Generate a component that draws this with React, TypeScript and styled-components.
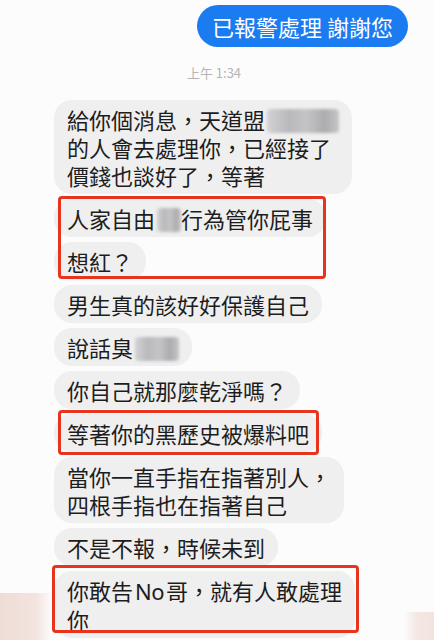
import React from "react";
import styled, { createGlobalStyle } from "styled-components";

const GlobalStyle = createGlobalStyle`
  html, body {
    margin: 0;
    padding: 0;
    background: #fcfcfc;
  }
  body {
    font-family: "Noto Sans CJK TC", "Noto Sans", sans-serif;
  }
`;

const Page = styled.div`
  position: relative;
  width: 434px;
  height: 640px;
  overflow: hidden;
  box-sizing: border-box;
  padding: 5px 26px 0 54px;
  display: flex;
  flex-direction: column;
  background:
    linear-gradient(90deg, #efdcd6 0%, #f3e4df 70%, rgba(252, 252, 252, 0) 100%) 0 593px / 52px 47px no-repeat,
    linear-gradient(90deg, rgba(252, 252, 252, 0) 0%, #f4e8e4 40%, #f2e3de 100%) 404px 612px / 30px 28px no-repeat,
    #fcfcfc;
`;

const OutgoingRow = styled.div`
  display: flex;
  justify-content: flex-end;
`;

const OutgoingBubble = styled.div`
  background: #1b7cf1;
  color: #ffffff;
  font-size: 22px;
  line-height: 28px;
  padding: 7px 15px;
  border-radius: 21px;
  white-space: nowrap;
`;

const Timestamp = styled.div`
  margin: 18px 0 19px;
  padding-right: 34px;
  text-align: center;
  font-size: 13px;
  line-height: 16px;
  color: #b4b4b4;
  font-family: "Noto Sans CJK TC", "Noto Sans", sans-serif;
`;

const Thread = styled.div`
  display: flex;
  flex-direction: column;
  align-items: flex-start;
  gap: 5px;
`;

const Bubble = styled.div`
  background: #efeff0;
  color: #1d1d1d;
  font-size: 22px;
  line-height: 28px;
  padding: 5px 13px;
  border-radius: 18px;
  white-space: nowrap;
`;

const Latin = styled.span`
  font-family: "Noto Sans", "Open Sans", sans-serif;
  letter-spacing: -0.5px;
  margin: 0 2px;
`;

/* Blurred-out words inside a message */
const Censor = styled.span<{ $w: number }>`
  display: inline-block;
  vertical-align: middle;
  width: ${(p) => p.$w}px;
  height: 24px;
  margin: -4px 0 0 2px;
  border-radius: 4px;
  background: linear-gradient(
    90deg,
    #d2d2d4 0%,
    #b9b9bb 30%,
    #c4c4c6 55%,
    #acacae 80%,
    #c6c6c8 100%
  );
  filter: blur(1.5px);
`;

/* Red annotation frame drawn over a group of messages */
const Highlight = styled.div<{ $t: number; $r: number; $b: number; $l: number }>`
  position: relative;
  display: flex;
  flex-direction: column;
  align-items: flex-start;
  gap: 5px;

  &::after {
    content: "";
    position: absolute;
    top: ${(p) => p.$t}px;
    right: ${(p) => p.$r}px;
    bottom: ${(p) => p.$b}px;
    left: ${(p) => p.$l}px;
    border: 3px solid #e8341f;
    border-radius: 4px;
    pointer-events: none;
  }
`;

export default function App() {
  return (
    <>
      <GlobalStyle />
      <Page>
        <OutgoingRow>
          <OutgoingBubble>已報警處理 謝謝您</OutgoingBubble>
        </OutgoingRow>
        <Timestamp>上午 1:34</Timestamp>
        <Thread>
          <Bubble>
            給你個消息，天道盟<Censor $w={72} />
            <br />
            的人會去處理你，已經接了
            <br />
            價錢也談好了，等著
          </Bubble>
          <Highlight $t={-3} $r={0} $b={1} $l={4}>
            <Bubble>
              人家自由<Censor $w={24} />行為管你屁事
            </Bubble>
            <Bubble>想紅？</Bubble>
          </Highlight>
          <Bubble>男生真的該好好保護自己</Bubble>
          <Bubble>
            說話臭<Censor $w={44} />
          </Bubble>
          <Bubble>你自己就那麼乾淨嗎？</Bubble>
          <Highlight $t={-4} $r={3} $b={-3} $l={4}>
            <Bubble>等著你的黑歷史被爆料吧</Bubble>
          </Highlight>
          <Bubble>
            當你一直手指在指著別人，
            <br />
            四根手指也在指著自己
          </Bubble>
          <Bubble>不是不報，時候未到</Bubble>
          <Highlight $t={-6} $r={-4} $b={5} $l={-2}>
            <Bubble>
              你敢告<Latin>No</Latin>哥，就有人敢處理
              <br />
              你
            </Bubble>
          </Highlight>
        </Thread>
      </Page>
    </>
  );
}
